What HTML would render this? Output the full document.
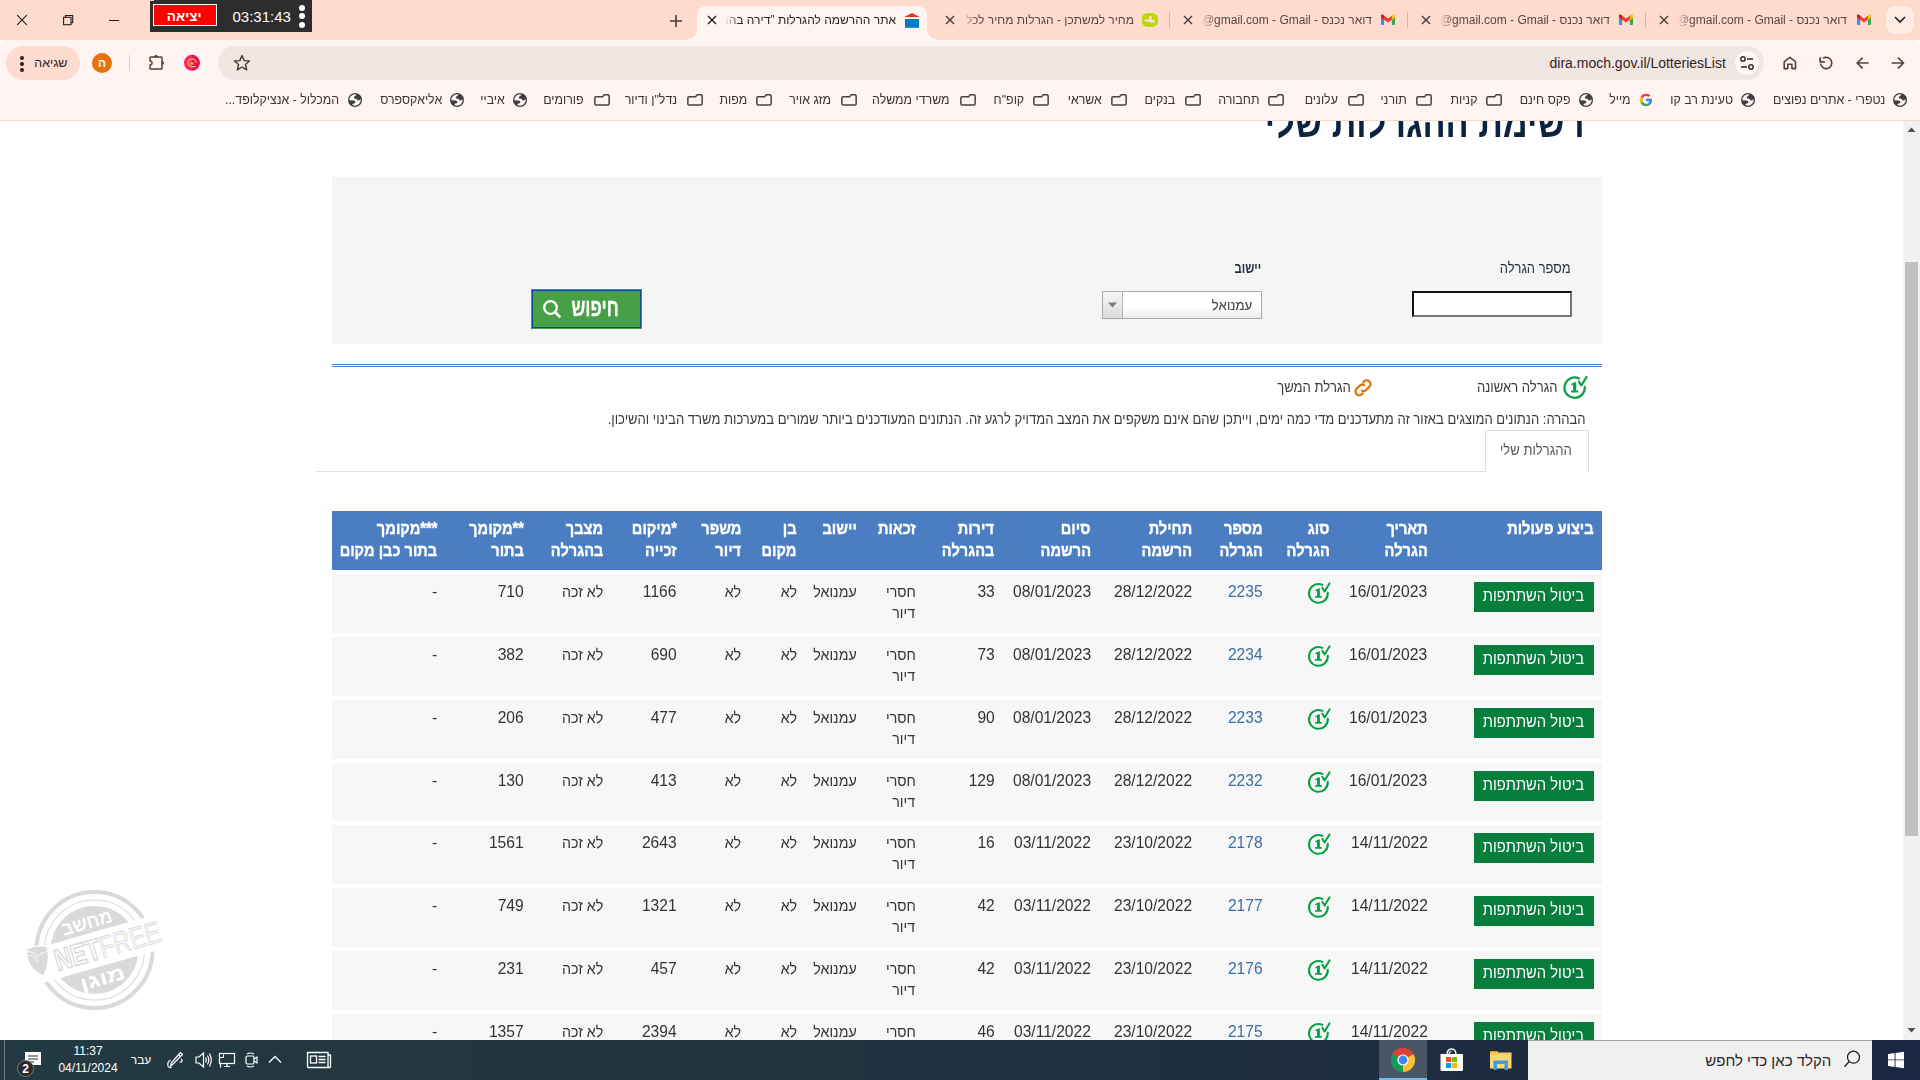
<!DOCTYPE html>
<html lang="he"><head><meta charset="utf-8"><title>dira</title>
<style>
html,body{margin:0;padding:0;}
body{width:1920px;height:1080px;overflow:hidden;position:relative;background:#fff;font-family:"Liberation Sans", sans-serif;}
.t{position:absolute;direction:rtl;white-space:nowrap;line-height:normal;}
.tl{position:absolute;direction:ltr;white-space:nowrap;line-height:normal;}
svg{display:block;}
</style></head><body>

<div style="position:absolute;left:0px;top:0px;width:1920px;height:40px;background:#fedbcc"></div>
<svg style="position:absolute;left:680px;top:0px;" width="270" height="41" viewBox="0 0 270 41"><path d="M0,40 Q16,40 17,30 L17,16 Q17,6 27,6 L237,6 Q247,6 247,16 L247,30 Q248,40 264,40 Z" fill="#fff4f1"/></svg>
<div style="position:absolute;left:1886px;top:6px;width:28px;height:28px;background:#ffece5;border-radius:9px"></div>
<svg style="position:absolute;left:1893px;top:14px;" width="14" height="12" viewBox="0 0 14 12"><path d="M2,3 L7,8 L12,3" fill="none" stroke="#1f1f1f" stroke-width="1.6"/></svg>
<svg style="position:absolute;left:15px;top:13px;" width="14" height="14" viewBox="0 0 14 14"><path d="M2.2,2.2 L11.8,11.8 M11.8,2.2 L2.2,11.8" stroke="#1f1f1f" stroke-width="1.1"/></svg>
<svg style="position:absolute;left:61px;top:13px;" width="14" height="14" viewBox="0 0 14 14"><rect x="2.6" y="4.3" width="7.4" height="7.4" fill="none" stroke="#1f1f1f" stroke-width="1.1"/><path d="M4.5,4.3 V2.5 H11.7 V9.7 H10" fill="none" stroke="#1f1f1f" stroke-width="1.1"/></svg>
<div style="position:absolute;left:109px;top:20px;width:10px;height:1px;background:#1f1f1f"></div>
<svg style="position:absolute;left:668px;top:13px;" width="16" height="16" viewBox="0 0 16 16"><path d="M8,2 V14 M2,8 H14" stroke="#4a3a35" stroke-width="1.6"/></svg>
<svg style="position:absolute;left:1857px;top:14px;" width="14" height="11" viewBox="0 0 14 11"><path d="M0,3.4 L3.1,5.7 V10.9 H0.9 Q0,10.9 0,10 Z" fill="#4285f4"/><path d="M10.9,5.7 L14,3.4 V10 Q14,10.9 13.1,10.9 H10.9 Z" fill="#34a853"/><path d="M10.9,1.7 L12.2,0.7 Q14,-0.2 14,1.9 V3.4 L10.9,5.7 Z" fill="#fbbc04"/><path d="M0,1.9 Q0,-0.2 1.8,0.7 L7,4.5 L10.9,1.7 V5.7 L7,8.4 L0,3.4 Z" fill="#ea4335"/><path d="M0,1.9 Q0,-0.2 1.8,0.7 L3.1,1.6 V5.7 L0,3.4 Z" fill="#c5221f"/></svg>
<div style="position:absolute;left:1677px;top:11px;width:170px;height:20px;overflow:hidden;-webkit-mask-image:linear-gradient(to right,transparent 0,#000 14px);mask-image:linear-gradient(to right,transparent 0,#000 14px);"><div style="position:absolute;right:0;top:0;white-space:nowrap;font-size:12px;line-height:18px;color:#5b4742;direction:ltr;display:flex;"><span>@gmail.com</span><span>&nbsp;-&nbsp;</span><span>Gmail</span><span>&nbsp;-&nbsp;</span><span dir="rtl">דואר נכנס</span></div></div>
<svg style="position:absolute;left:1658px;top:14px;" width="12" height="12" viewBox="0 0 12 12"><path d="M2,2 L10,10 M10,2 L2,10" stroke="#4a3a35" stroke-width="1.4"/></svg>
<div style="position:absolute;left:1645px;top:12px;width:1px;height:16px;background:#f3a98c"></div>
<svg style="position:absolute;left:1619px;top:14px;" width="14" height="11" viewBox="0 0 14 11"><path d="M0,3.4 L3.1,5.7 V10.9 H0.9 Q0,10.9 0,10 Z" fill="#4285f4"/><path d="M10.9,5.7 L14,3.4 V10 Q14,10.9 13.1,10.9 H10.9 Z" fill="#34a853"/><path d="M10.9,1.7 L12.2,0.7 Q14,-0.2 14,1.9 V3.4 L10.9,5.7 Z" fill="#fbbc04"/><path d="M0,1.9 Q0,-0.2 1.8,0.7 L7,4.5 L10.9,1.7 V5.7 L7,8.4 L0,3.4 Z" fill="#ea4335"/><path d="M0,1.9 Q0,-0.2 1.8,0.7 L3.1,1.6 V5.7 L0,3.4 Z" fill="#c5221f"/></svg>
<div style="position:absolute;left:1439px;top:11px;width:171px;height:20px;overflow:hidden;-webkit-mask-image:linear-gradient(to right,transparent 0,#000 14px);mask-image:linear-gradient(to right,transparent 0,#000 14px);"><div style="position:absolute;right:0;top:0;white-space:nowrap;font-size:12px;line-height:18px;color:#5b4742;direction:ltr;display:flex;"><span>@gmail.com</span><span>&nbsp;-&nbsp;</span><span>Gmail</span><span>&nbsp;-&nbsp;</span><span dir="rtl">דואר נכנס</span></div></div>
<svg style="position:absolute;left:1420px;top:14px;" width="12" height="12" viewBox="0 0 12 12"><path d="M2,2 L10,10 M10,2 L2,10" stroke="#4a3a35" stroke-width="1.4"/></svg>
<div style="position:absolute;left:1407px;top:12px;width:1px;height:16px;background:#f3a98c"></div>
<svg style="position:absolute;left:1381px;top:14px;" width="14" height="11" viewBox="0 0 14 11"><path d="M0,3.4 L3.1,5.7 V10.9 H0.9 Q0,10.9 0,10 Z" fill="#4285f4"/><path d="M10.9,5.7 L14,3.4 V10 Q14,10.9 13.1,10.9 H10.9 Z" fill="#34a853"/><path d="M10.9,1.7 L12.2,0.7 Q14,-0.2 14,1.9 V3.4 L10.9,5.7 Z" fill="#fbbc04"/><path d="M0,1.9 Q0,-0.2 1.8,0.7 L7,4.5 L10.9,1.7 V5.7 L7,8.4 L0,3.4 Z" fill="#ea4335"/><path d="M0,1.9 Q0,-0.2 1.8,0.7 L3.1,1.6 V5.7 L0,3.4 Z" fill="#c5221f"/></svg>
<div style="position:absolute;left:1201px;top:11px;width:171px;height:20px;overflow:hidden;-webkit-mask-image:linear-gradient(to right,transparent 0,#000 14px);mask-image:linear-gradient(to right,transparent 0,#000 14px);"><div style="position:absolute;right:0;top:0;white-space:nowrap;font-size:12px;line-height:18px;color:#5b4742;direction:ltr;display:flex;"><span>@gmail.com</span><span>&nbsp;-&nbsp;</span><span>Gmail</span><span>&nbsp;-&nbsp;</span><span dir="rtl">דואר נכנס</span></div></div>
<svg style="position:absolute;left:1182px;top:14px;" width="12" height="12" viewBox="0 0 12 12"><path d="M2,2 L10,10 M10,2 L2,10" stroke="#4a3a35" stroke-width="1.4"/></svg>
<div style="position:absolute;left:1169px;top:12px;width:1px;height:16px;background:#f3a98c"></div>
<svg style="position:absolute;left:1142px;top:12px;" width="16" height="16" viewBox="0 0 16 16"><rect x="0" y="0.9" width="16" height="14" rx="5.5" fill="#bed600"/><path d="M7,4.1 H9.6 V7.6 L12.7,8.2 V10.9 L2.6,9.6 V7.2 L7,7.5 Z" fill="#fedbcc"/></svg>
<div style="position:absolute;left:963px;top:11px;width:171px;height:20px;overflow:hidden;-webkit-mask-image:linear-gradient(to right,transparent 0,#000 14px);mask-image:linear-gradient(to right,transparent 0,#000 14px);"><div style="position:absolute;right:0;top:0;white-space:nowrap;font-size:12px;line-height:18px;color:#5b4742;direction:ltr;display:flex;"><span dir="rtl">מחיר למשתכן - הגרלות מחיר לכל</span></div></div>
<svg style="position:absolute;left:944px;top:14px;" width="12" height="12" viewBox="0 0 12 12"><path d="M2,2 L10,10 M10,2 L2,10" stroke="#4a3a35" stroke-width="1.4"/></svg>
<svg style="position:absolute;left:904px;top:12px;" width="16" height="16" viewBox="0 0 16 16"><path d="M0.1,4.9 L8,1 L15.8,4.9 Z" fill="#e8321e"/><rect x="1" y="7" width="14" height="8.8" fill="#007bc4"/></svg>
<div style="position:absolute;left:725px;top:11px;width:171px;height:20px;overflow:hidden;-webkit-mask-image:linear-gradient(to right,transparent 0,#000 14px);mask-image:linear-gradient(to right,transparent 0,#000 14px);"><div style="position:absolute;right:0;top:0;white-space:nowrap;font-size:12px;line-height:18px;color:#2a2220;direction:ltr;display:flex;"><span dir="rtl">אתר ההרשמה להגרלות "דירה בהנחה"</span></div></div>
<svg style="position:absolute;left:706px;top:14px;" width="12" height="12" viewBox="0 0 12 12"><path d="M2,2 L10,10 M10,2 L2,10" stroke="#1f1f1f" stroke-width="1.4"/></svg>
<div style="position:absolute;left:0px;top:40px;width:1920px;height:44px;background:#fff4f1;border-radius:8px 8px 0 0"></div>
<div style="position:absolute;left:218px;top:46px;width:1546px;height:34px;background:#f2e6e2;border-radius:17px"></div>
<div style="position:absolute;left:1735px;top:51px;width:24px;height:24px;background:#fff8f6;border-radius:12px"></div>
<svg style="position:absolute;left:1739px;top:55px;" width="16" height="16" viewBox="0 0 16 16"><circle cx="4" cy="4" r="2.2" fill="none" stroke="#3a2e2b" stroke-width="1.5"/><path d="M8,4 H14" stroke="#3a2e2b" stroke-width="1.6"/><circle cx="12" cy="12" r="2.2" fill="none" stroke="#3a2e2b" stroke-width="1.5"/><path d="M2,12 H8" stroke="#3a2e2b" stroke-width="1.6"/></svg>
<div class="tl " style="left:1549.5px;top:55.3px;font-size:14px;color:#2f2522;font-weight:normal;">dira.moch.gov.il/LotteriesList</div>
<svg style="position:absolute;left:232px;top:53px;" width="20" height="20" viewBox="0 0 20 20"><path d="M10,2.5 L12.2,7.6 L17.5,8 L13.4,11.5 L14.7,16.8 L10,14 L5.3,16.8 L6.6,11.5 L2.5,8 L7.8,7.6 Z" fill="none" stroke="#4a3a35" stroke-width="1.4" stroke-linejoin="round"/></svg>
<svg style="position:absolute;left:1888px;top:54px;" width="20" height="18" viewBox="0 0 20 18"><path d="M3.6,9 H15 M10,3.6 L15.4,9 L10,14.4" fill="none" stroke="#5a4037" stroke-width="1.6"/></svg>
<svg style="position:absolute;left:1852px;top:54px;" width="20" height="18" viewBox="0 0 20 18"><path d="M16.6,9 H5.2 M10.6,3.6 L5.2,9 L10.6,14.4" fill="none" stroke="#5a4037" stroke-width="1.6"/></svg>
<svg style="position:absolute;left:1816px;top:53px;" width="20" height="20" viewBox="0 0 20 20"><path d="M4.62,10.49 A5.6,5.6 0 1 0 6.99,5.41" fill="none" stroke="#5a4037" stroke-width="1.6"/><path d="M4.2,4.2 V8.8 H8.8" fill="none" stroke="#5a4037" stroke-width="1.7"/></svg>
<svg style="position:absolute;left:1780px;top:53px;" width="20" height="20" viewBox="0 0 20 20"><path d="M4.2,15.6 V8.6 L9.85,4.3 L15.5,8.6 V15.6 H11.9 V11.2 H7.8 V15.6 Z" fill="none" stroke="#5a4037" stroke-width="1.6" stroke-linejoin="round"/></svg>
<svg style="position:absolute;left:183px;top:54px;" width="18" height="18" viewBox="0 0 18 18"><defs><linearGradient id="pg" x1="0" x2="1"><stop offset="0" stop-color="#ff1f6b"/><stop offset="0.5" stop-color="#ff1f6b"/><stop offset="0.5" stop-color="#e3105c"/><stop offset="1" stop-color="#e3105c"/></linearGradient></defs><circle cx="9" cy="8.8" r="8" fill="url(#pg)"/><path d="M12.8,12.6 H9 A3.9,3.9 0 1 1 12.9,8.7" fill="none" stroke="#ffc23d" stroke-width="1.3"/><path d="M6.6,10.6 L8.8,7.2 L11,10.6 Z" fill="#ffb13d"/></svg>
<svg style="position:absolute;left:146px;top:53px;" width="20" height="20" viewBox="0 0 20 20"><path d="M4,4.8 Q4,4 4.8,4 H15.2 Q16,4 16,4.8 V15.2 Q16,16 15.2,16 H4.8 Q4,16 4,15.2 V12 A2,2 0 0 0 4,8 Z" fill="none" stroke="#5a4037" stroke-width="1.5" stroke-linejoin="round"/><path d="M8.2,4 A1.8,1.8 0 0 1 11.8,4 Z M16,8.2 A1.8,1.8 0 0 1 16,11.8 Z" fill="#5a4037" stroke="#5a4037" stroke-width="0.6"/></svg>
<div style="position:absolute;left:129px;top:55px;width:1px;height:16px;background:#f6c4b0"></div>
<div style="position:absolute;left:92px;top:53px;width:20px;height:20px;background:#e8710a;border-radius:10px"></div>
<div style="position:absolute;left:92px;top:53px;width:20px;height:20px;line-height:20px;text-align:center;color:#fff;font-size:12px;font-weight:bold;direction:rtl">ה</div>
<div style="position:absolute;left:6px;top:46px;width:74px;height:34px;background:#fedccf;border-radius:17px"></div>
<div style="position:absolute;left:20px;top:55.5px;width:4px;height:4px;background:#2b1f1c;border-radius:2px"></div>
<div style="position:absolute;left:20px;top:61.5px;width:4px;height:4px;background:#2b1f1c;border-radius:2px"></div>
<div style="position:absolute;left:20px;top:67.5px;width:4px;height:4px;background:#2b1f1c;border-radius:2px"></div>
<div class="t " style="right:1852.5px;top:56.2px;font-size:12.5px;color:#2b1f1c;font-weight:normal;">שגיאה</div>
<div style="position:absolute;left:0px;top:84px;width:1920px;height:36px;background:#fff4f1"></div>
<div style="position:absolute;left:0px;top:120px;width:1920px;height:1px;background:#f6d6c9"></div>
<svg style="position:absolute;left:1892px;top:92px;" width="16" height="16" viewBox="0 0 16 16"><circle cx="8" cy="8" r="6.35" fill="none" stroke="#3c4043" stroke-width="1.35"/><path d="M9.6,1.8 Q9.4,3.2 8.2,3.9 Q6.8,4.6 6.9,5.9 Q7.2,6.8 8.6,6.6 Q9.6,6.8 10.2,7.8 Q11.2,8.8 12.2,8.2 Q13.4,7.6 14.2,6.6 L14.4,5.2 Q13,2.6 9.6,1.8 Z" fill="#3c4043"/><path d="M1.8,8.2 Q4.2,8.2 6.6,8.6 Q8.6,9.2 8.4,10.4 Q8.0,11.4 6.4,11.5 Q5.4,11.8 5.4,13 L5.6,14.2 Q2.4,12.6 1.8,8.2 Z" fill="#3c4043"/></svg>
<div class="t " style="right:35.0px;top:92.2px;font-size:13px;color:#3d3230;font-weight:normal;transform:scaleX(0.95);transform-origin:100% 50%;">נטפרי - אתרים נפוצים</div>
<svg style="position:absolute;left:1740px;top:92px;" width="16" height="16" viewBox="0 0 16 16"><circle cx="8" cy="8" r="6.35" fill="none" stroke="#3c4043" stroke-width="1.35"/><path d="M9.6,1.8 Q9.4,3.2 8.2,3.9 Q6.8,4.6 6.9,5.9 Q7.2,6.8 8.6,6.6 Q9.6,6.8 10.2,7.8 Q11.2,8.8 12.2,8.2 Q13.4,7.6 14.2,6.6 L14.4,5.2 Q13,2.6 9.6,1.8 Z" fill="#3c4043"/><path d="M1.8,8.2 Q4.2,8.2 6.6,8.6 Q8.6,9.2 8.4,10.4 Q8.0,11.4 6.4,11.5 Q5.4,11.8 5.4,13 L5.6,14.2 Q2.4,12.6 1.8,8.2 Z" fill="#3c4043"/></svg>
<div class="t " style="right:187.0px;top:92.2px;font-size:13px;color:#3d3230;font-weight:normal;transform:scaleX(0.95);transform-origin:100% 50%;">טעינת רב קו</div>
<svg style="position:absolute;left:1638px;top:92px;" width="16" height="16" viewBox="0 0 16 16"><g transform="translate(8,8) scale(0.84) translate(-8,-8.1)"><path d="M15.2,8.2 Q15.2,7.4 15.1,6.7 H8 V9.6 H12.1 Q11.8,11 10.6,11.9 V13.8 H13 Q15.2,11.8 15.2,8.2 Z" fill="#4285f4"/><path d="M8,15.4 Q10.9,15.4 13,13.8 L10.6,11.9 Q9.6,12.6 8,12.6 Q5.2,12.6 4.2,10 H1.8 V12 Q3.8,15.4 8,15.4 Z" fill="#34a853"/><path d="M4.2,10 Q3.9,9.1 3.9,8 Q3.9,6.9 4.2,6 V4 H1.8 Q0.8,5.9 0.8,8 Q0.8,10.1 1.8,12 Z" fill="#fbbc05"/><path d="M8,3.4 Q9.7,3.4 10.8,4.5 L13,2.3 Q11,0.6 8,0.6 Q3.8,0.6 1.8,4 L4.2,6 Q5.2,3.4 8,3.4 Z" fill="#ea4335"/></g></svg>
<div class="t " style="right:289.3px;top:92.2px;font-size:13px;color:#3d3230;font-weight:normal;transform:scaleX(0.95);transform-origin:100% 50%;">מייל</div>
<svg style="position:absolute;left:1578px;top:92px;" width="16" height="16" viewBox="0 0 16 16"><circle cx="8" cy="8" r="6.35" fill="none" stroke="#3c4043" stroke-width="1.35"/><path d="M9.6,1.8 Q9.4,3.2 8.2,3.9 Q6.8,4.6 6.9,5.9 Q7.2,6.8 8.6,6.6 Q9.6,6.8 10.2,7.8 Q11.2,8.8 12.2,8.2 Q13.4,7.6 14.2,6.6 L14.4,5.2 Q13,2.6 9.6,1.8 Z" fill="#3c4043"/><path d="M1.8,8.2 Q4.2,8.2 6.6,8.6 Q8.6,9.2 8.4,10.4 Q8.0,11.4 6.4,11.5 Q5.4,11.8 5.4,13 L5.6,14.2 Q2.4,12.6 1.8,8.2 Z" fill="#3c4043"/></svg>
<div class="t " style="right:349.0px;top:92.2px;font-size:13px;color:#3d3230;font-weight:normal;transform:scaleX(0.95);transform-origin:100% 50%;">פקס חינם</div>
<svg style="position:absolute;left:1484px;top:93px;" width="20" height="14" viewBox="0 0 20 14"><path d="M2.85,5 Q2.85,3.75 4.1,3.75 H10.6 L12.1,1.85 H15.9 Q17.15,1.85 17.15,3.1 V10.8 Q17.15,12.05 15.9,12.05 H4.1 Q2.85,12.05 2.85,10.8 Z" fill="none" stroke="#4a3f3c" stroke-width="1.5" stroke-linejoin="round"/></svg>
<div class="t " style="right:443.0px;top:92.2px;font-size:13px;color:#3d3230;font-weight:normal;transform:scaleX(0.95);transform-origin:100% 50%;">קניות</div>
<svg style="position:absolute;left:1414px;top:93px;" width="20" height="14" viewBox="0 0 20 14"><path d="M2.85,5 Q2.85,3.75 4.1,3.75 H10.6 L12.1,1.85 H15.9 Q17.15,1.85 17.15,3.1 V10.8 Q17.15,12.05 15.9,12.05 H4.1 Q2.85,12.05 2.85,10.8 Z" fill="none" stroke="#4a3f3c" stroke-width="1.5" stroke-linejoin="round"/></svg>
<div class="t " style="right:513.0px;top:92.2px;font-size:13px;color:#3d3230;font-weight:normal;transform:scaleX(0.95);transform-origin:100% 50%;">תורני</div>
<svg style="position:absolute;left:1346px;top:93px;" width="20" height="14" viewBox="0 0 20 14"><path d="M2.85,5 Q2.85,3.75 4.1,3.75 H10.6 L12.1,1.85 H15.9 Q17.15,1.85 17.15,3.1 V10.8 Q17.15,12.05 15.9,12.05 H4.1 Q2.85,12.05 2.85,10.8 Z" fill="none" stroke="#4a3f3c" stroke-width="1.5" stroke-linejoin="round"/></svg>
<div class="t " style="right:582.0px;top:92.2px;font-size:13px;color:#3d3230;font-weight:normal;transform:scaleX(0.95);transform-origin:100% 50%;">עלונים</div>
<svg style="position:absolute;left:1266px;top:93px;" width="20" height="14" viewBox="0 0 20 14"><path d="M2.85,5 Q2.85,3.75 4.1,3.75 H10.6 L12.1,1.85 H15.9 Q17.15,1.85 17.15,3.1 V10.8 Q17.15,12.05 15.9,12.05 H4.1 Q2.85,12.05 2.85,10.8 Z" fill="none" stroke="#4a3f3c" stroke-width="1.5" stroke-linejoin="round"/></svg>
<div class="t " style="right:660.7px;top:92.2px;font-size:13px;color:#3d3230;font-weight:normal;transform:scaleX(0.95);transform-origin:100% 50%;">תחבורה</div>
<svg style="position:absolute;left:1183px;top:93px;" width="20" height="14" viewBox="0 0 20 14"><path d="M2.85,5 Q2.85,3.75 4.1,3.75 H10.6 L12.1,1.85 H15.9 Q17.15,1.85 17.15,3.1 V10.8 Q17.15,12.05 15.9,12.05 H4.1 Q2.85,12.05 2.85,10.8 Z" fill="none" stroke="#4a3f3c" stroke-width="1.5" stroke-linejoin="round"/></svg>
<div class="t " style="right:745.0px;top:92.2px;font-size:13px;color:#3d3230;font-weight:normal;transform:scaleX(0.95);transform-origin:100% 50%;">בנקים</div>
<svg style="position:absolute;left:1109px;top:93px;" width="20" height="14" viewBox="0 0 20 14"><path d="M2.85,5 Q2.85,3.75 4.1,3.75 H10.6 L12.1,1.85 H15.9 Q17.15,1.85 17.15,3.1 V10.8 Q17.15,12.05 15.9,12.05 H4.1 Q2.85,12.05 2.85,10.8 Z" fill="none" stroke="#4a3f3c" stroke-width="1.5" stroke-linejoin="round"/></svg>
<div class="t " style="right:818.3px;top:92.2px;font-size:13px;color:#3d3230;font-weight:normal;transform:scaleX(0.95);transform-origin:100% 50%;">אשראי</div>
<svg style="position:absolute;left:1031px;top:93px;" width="20" height="14" viewBox="0 0 20 14"><path d="M2.85,5 Q2.85,3.75 4.1,3.75 H10.6 L12.1,1.85 H15.9 Q17.15,1.85 17.15,3.1 V10.8 Q17.15,12.05 15.9,12.05 H4.1 Q2.85,12.05 2.85,10.8 Z" fill="none" stroke="#4a3f3c" stroke-width="1.5" stroke-linejoin="round"/></svg>
<div class="t " style="right:896.0px;top:92.2px;font-size:13px;color:#3d3230;font-weight:normal;transform:scaleX(0.95);transform-origin:100% 50%;">קופ"ח</div>
<svg style="position:absolute;left:958px;top:93px;" width="20" height="14" viewBox="0 0 20 14"><path d="M2.85,5 Q2.85,3.75 4.1,3.75 H10.6 L12.1,1.85 H15.9 Q17.15,1.85 17.15,3.1 V10.8 Q17.15,12.05 15.9,12.05 H4.1 Q2.85,12.05 2.85,10.8 Z" fill="none" stroke="#4a3f3c" stroke-width="1.5" stroke-linejoin="round"/></svg>
<div class="t " style="right:970.0px;top:92.2px;font-size:13px;color:#3d3230;font-weight:normal;transform:scaleX(0.95);transform-origin:100% 50%;">משרדי ממשלה</div>
<svg style="position:absolute;left:839px;top:93px;" width="20" height="14" viewBox="0 0 20 14"><path d="M2.85,5 Q2.85,3.75 4.1,3.75 H10.6 L12.1,1.85 H15.9 Q17.15,1.85 17.15,3.1 V10.8 Q17.15,12.05 15.9,12.05 H4.1 Q2.85,12.05 2.85,10.8 Z" fill="none" stroke="#4a3f3c" stroke-width="1.5" stroke-linejoin="round"/></svg>
<div class="t " style="right:1089.0px;top:92.2px;font-size:13px;color:#3d3230;font-weight:normal;transform:scaleX(0.95);transform-origin:100% 50%;">מזג אויר</div>
<svg style="position:absolute;left:754px;top:93px;" width="20" height="14" viewBox="0 0 20 14"><path d="M2.85,5 Q2.85,3.75 4.1,3.75 H10.6 L12.1,1.85 H15.9 Q17.15,1.85 17.15,3.1 V10.8 Q17.15,12.05 15.9,12.05 H4.1 Q2.85,12.05 2.85,10.8 Z" fill="none" stroke="#4a3f3c" stroke-width="1.5" stroke-linejoin="round"/></svg>
<div class="t " style="right:1173.0px;top:92.2px;font-size:13px;color:#3d3230;font-weight:normal;transform:scaleX(0.95);transform-origin:100% 50%;">מפות</div>
<svg style="position:absolute;left:685px;top:93px;" width="20" height="14" viewBox="0 0 20 14"><path d="M2.85,5 Q2.85,3.75 4.1,3.75 H10.6 L12.1,1.85 H15.9 Q17.15,1.85 17.15,3.1 V10.8 Q17.15,12.05 15.9,12.05 H4.1 Q2.85,12.05 2.85,10.8 Z" fill="none" stroke="#4a3f3c" stroke-width="1.5" stroke-linejoin="round"/></svg>
<div class="t " style="right:1242.5px;top:92.2px;font-size:13px;color:#3d3230;font-weight:normal;transform:scaleX(0.95);transform-origin:100% 50%;">נדל"ן ודיור</div>
<svg style="position:absolute;left:592px;top:93px;" width="20" height="14" viewBox="0 0 20 14"><path d="M2.85,5 Q2.85,3.75 4.1,3.75 H10.6 L12.1,1.85 H15.9 Q17.15,1.85 17.15,3.1 V10.8 Q17.15,12.05 15.9,12.05 H4.1 Q2.85,12.05 2.85,10.8 Z" fill="none" stroke="#4a3f3c" stroke-width="1.5" stroke-linejoin="round"/></svg>
<div class="t " style="right:1336.2px;top:92.2px;font-size:13px;color:#3d3230;font-weight:normal;transform:scaleX(0.95);transform-origin:100% 50%;">פורומים</div>
<svg style="position:absolute;left:512px;top:92px;" width="16" height="16" viewBox="0 0 16 16"><circle cx="8" cy="8" r="6.35" fill="none" stroke="#3c4043" stroke-width="1.35"/><path d="M9.6,1.8 Q9.4,3.2 8.2,3.9 Q6.8,4.6 6.9,5.9 Q7.2,6.8 8.6,6.6 Q9.6,6.8 10.2,7.8 Q11.2,8.8 12.2,8.2 Q13.4,7.6 14.2,6.6 L14.4,5.2 Q13,2.6 9.6,1.8 Z" fill="#3c4043"/><path d="M1.8,8.2 Q4.2,8.2 6.6,8.6 Q8.6,9.2 8.4,10.4 Q8.0,11.4 6.4,11.5 Q5.4,11.8 5.4,13 L5.6,14.2 Q2.4,12.6 1.8,8.2 Z" fill="#3c4043"/></svg>
<div class="t " style="right:1415.5px;top:92.2px;font-size:13px;color:#3d3230;font-weight:normal;transform:scaleX(0.95);transform-origin:100% 50%;">איביי</div>
<svg style="position:absolute;left:449px;top:92px;" width="16" height="16" viewBox="0 0 16 16"><circle cx="8" cy="8" r="6.35" fill="none" stroke="#3c4043" stroke-width="1.35"/><path d="M9.6,1.8 Q9.4,3.2 8.2,3.9 Q6.8,4.6 6.9,5.9 Q7.2,6.8 8.6,6.6 Q9.6,6.8 10.2,7.8 Q11.2,8.8 12.2,8.2 Q13.4,7.6 14.2,6.6 L14.4,5.2 Q13,2.6 9.6,1.8 Z" fill="#3c4043"/><path d="M1.8,8.2 Q4.2,8.2 6.6,8.6 Q8.6,9.2 8.4,10.4 Q8.0,11.4 6.4,11.5 Q5.4,11.8 5.4,13 L5.6,14.2 Q2.4,12.6 1.8,8.2 Z" fill="#3c4043"/></svg>
<div class="t " style="right:1478.0px;top:92.2px;font-size:13px;color:#3d3230;font-weight:normal;transform:scaleX(0.95);transform-origin:100% 50%;">אליאקספרס</div>
<svg style="position:absolute;left:347px;top:92px;" width="16" height="16" viewBox="0 0 16 16"><circle cx="8" cy="8" r="6.35" fill="none" stroke="#3c4043" stroke-width="1.35"/><path d="M9.6,1.8 Q9.4,3.2 8.2,3.9 Q6.8,4.6 6.9,5.9 Q7.2,6.8 8.6,6.6 Q9.6,6.8 10.2,7.8 Q11.2,8.8 12.2,8.2 Q13.4,7.6 14.2,6.6 L14.4,5.2 Q13,2.6 9.6,1.8 Z" fill="#3c4043"/><path d="M1.8,8.2 Q4.2,8.2 6.6,8.6 Q8.6,9.2 8.4,10.4 Q8.0,11.4 6.4,11.5 Q5.4,11.8 5.4,13 L5.6,14.2 Q2.4,12.6 1.8,8.2 Z" fill="#3c4043"/></svg>
<div class="t " style="right:1580.5px;top:92.2px;font-size:13px;color:#3d3230;font-weight:normal;transform:scaleX(0.95);transform-origin:100% 50%;">המכלול - אנציקלופד...</div>
<div style="position:absolute;left:150px;top:0px;width:162px;height:32px;background:#2d2d2d"></div>
<div style="position:absolute;left:150px;top:0px;width:4px;height:1px;background:#fedbcc"></div>
<div style="position:absolute;left:153px;top:4px;width:64px;height:22px;background:#ff0000;box-sizing:border-box;border:1px solid #fff"></div>
<div class="t " style="right:1718.5px;top:8.8px;font-size:13.5px;color:#fff;font-weight:bold;">יציאה</div>
<div class="tl " style="left:232.5px;top:8.4px;font-size:15px;color:#fff;font-weight:normal;">03:31:43</div>
<div style="position:absolute;left:299px;top:4.5px;width:6px;height:6px;background:#fff;border-radius:3px"></div>
<div style="position:absolute;left:299px;top:13.399999999999999px;width:6px;height:6px;background:#fff;border-radius:3px"></div>
<div style="position:absolute;left:299px;top:21.6px;width:6px;height:6px;background:#fff;border-radius:3px"></div>
<div id="page" style="position:absolute;left:0;top:0;width:1920px;height:1080px;clip-path:inset(121px 17px 40px 0);">
<div style="position:absolute;left:0px;top:121px;width:1903px;height:919px;background:#fff"></div>
<div class="t " style="right:335.0px;top:100.8px;font-size:40px;color:#0b2340;font-weight:bold;transform:scaleX(0.856);transform-origin:100% 50%;">רשימת ההגרלות שלי</div>
<div style="position:absolute;left:332px;top:177px;width:1270px;height:167px;background:#f5f5f5"></div>
<div class="t " style="right:349.0px;top:260.2px;font-size:14.5px;color:#1f2d3d;font-weight:normal;transform:scaleX(0.89);transform-origin:100% 50%;">מספר הגרלה</div>
<div style="position:absolute;left:1412px;top:291px;width:160px;height:26px;background:#fff;box-sizing:border-box;border:2px solid;border-color:#111 #767676 #767676 #111"></div>
<div class="t " style="right:658.8px;top:260.2px;font-size:14.5px;color:#1f2d3d;font-weight:bold;transform:scaleX(0.78);transform-origin:100% 50%;">יישוב</div>
<div style="position:absolute;left:1102px;top:291px;width:160px;height:28px;box-sizing:border-box;border:1px solid #a9a9a9;background:linear-gradient(#fff 0,#fff 55%,#ececec 100%)"></div>
<div style="position:absolute;left:1103px;top:292px;width:20px;height:26px;box-sizing:border-box;border-right:1px solid #b5b5b5;background:linear-gradient(#f6f6f6,#dcdcdc)"></div>
<svg style="position:absolute;left:1107px;top:301px;" width="11" height="8" viewBox="0 0 11 8"><path d="M1,1.5 H10 L5.5,6.5 Z" fill="#7a7a7a"/></svg>
<div class="t " style="right:667.7px;top:297.7px;font-size:13.5px;color:#3a3a3a;font-weight:normal;transform:scaleX(0.98);transform-origin:100% 50%;">עמנואל</div>
<div style="position:absolute;left:531px;top:289px;width:111px;height:40px;background:#47a046;box-shadow:inset 0 0 0 1px #47a046,inset 0 0 0 2px #0b4a8a"></div>
<div class="t " style="right:1301.2px;top:294.0px;font-size:24px;color:#fff;font-weight:bold;transform:scaleX(0.72);transform-origin:100% 50%;-webkit-text-stroke:0.3px #fff;">חיפוש</div>
<svg style="position:absolute;left:540px;top:297px;" width="24" height="24" viewBox="0 0 24 24"><circle cx="10.5" cy="10.5" r="6.3" fill="none" stroke="#fff" stroke-width="2.3"/><path d="M15,15 L19.5,19.5" stroke="#fff" stroke-width="2.6" stroke-linecap="round"/></svg>
<div style="position:absolute;left:332px;top:364px;width:1270px;height:1px;background:#4a7abf"></div>
<div style="position:absolute;left:332px;top:366px;width:1270px;height:1px;background:#4a7abf"></div>
<svg style="position:absolute;left:1558.4px;top:371.4px;" width="35" height="35" viewBox="0 0 35 35"><g transform="scale(1.08)"><path d="M19.37,6.88 A9.4,9.4 0 1 0 24.78,14.74" fill="none" stroke="#08a045" stroke-width="2.1" stroke-linecap="round"/><path d="M19.3,9.8 L21.6,13.4 L26.5,5.4" fill="none" stroke="#08a045" stroke-width="2" stroke-linecap="round" stroke-linejoin="round"/><path d="M12.4,11.9 L15.2,10.4 H16.9 V18.1 H18.8 V19.8 H12.1 V18.1 H14 V12.8 L12.4,13.5 Z" fill="#08a045"/></g></svg>
<div class="t " style="right:362.6px;top:379.4px;font-size:14.5px;color:#3a3a3a;font-weight:normal;transform:scaleX(0.9);transform-origin:100% 50%;">הגרלה ראשונה</div>
<svg style="position:absolute;left:1351px;top:376px;" width="24" height="24" viewBox="0 0 24 24"><g transform="translate(12.0,11.8) rotate(-45)" fill="none" stroke="#e07000" stroke-width="2.2" stroke-linecap="butt"><path d="M-2.8,0.4 A3.8,3.8 0 0 0 1.0,3.8 L5.2,3.8 A3.8,3.8 0 0 0 5.2,-3.8 L3.4,-3.8"/><path d="M2.8,-0.4 A3.8,3.8 0 0 0 -1.0,-3.8 L-5.2,-3.8 A3.8,3.8 0 0 0 -5.2,3.8 L-3.4,3.8"/></g></svg>
<div class="t " style="right:569.0px;top:379.4px;font-size:14.5px;color:#3a3a3a;font-weight:normal;transform:scaleX(0.9);transform-origin:100% 50%;">הגרלת המשך</div>
<div class="t " style="right:334.0px;top:410.9px;font-size:14.5px;color:#3a3a3a;font-weight:normal;transform:scaleX(0.9);transform-origin:100% 50%;">הבהרה: הנתונים המוצגים באזור זה מתעדכנים מדי כמה ימים, וייתכן שהם אינם משקפים את המצב המדויק לרגע זה. הנתונים המעודכנים ביותר שמורים במערכות משרד הבינוי והשיכון.</div>
<div style="position:absolute;left:317px;top:471px;width:1169px;height:1px;background:#dddddd"></div>
<div style="position:absolute;left:1485px;top:430px;width:104px;height:42px;box-sizing:border-box;border:1px solid #dddddd;border-bottom:none;background:#fff"></div>
<div class="t " style="right:348.0px;top:441.9px;font-size:14.5px;color:#555555;font-weight:normal;transform:scaleX(0.9);transform-origin:100% 50%;">ההגרלות שלי</div>
<div style="position:absolute;left:332px;top:511px;width:1270px;height:59px;background:#4a7dc1"></div>
<div class="t " style="right:326.5px;top:518.9px;font-size:16.5px;color:#fff;font-weight:bold;transform:scaleX(0.885);transform-origin:100% 50%;-webkit-text-stroke:0.4px #fff;">ביצוע פעולות</div>
<div class="t " style="right:492.5px;top:518.9px;font-size:16.5px;color:#fff;font-weight:bold;transform:scaleX(0.885);transform-origin:100% 50%;-webkit-text-stroke:0.4px #fff;">תאריך</div>
<div class="t " style="right:492.5px;top:540.8px;font-size:16.5px;color:#fff;font-weight:bold;transform:scaleX(0.885);transform-origin:100% 50%;-webkit-text-stroke:0.4px #fff;">הגרלה</div>
<div class="t " style="right:590.5px;top:518.9px;font-size:16.5px;color:#fff;font-weight:bold;transform:scaleX(0.885);transform-origin:100% 50%;-webkit-text-stroke:0.4px #fff;">סוג</div>
<div class="t " style="right:590.5px;top:540.8px;font-size:16.5px;color:#fff;font-weight:bold;transform:scaleX(0.885);transform-origin:100% 50%;-webkit-text-stroke:0.4px #fff;">הגרלה</div>
<div class="t " style="right:657.5px;top:518.9px;font-size:16.5px;color:#fff;font-weight:bold;transform:scaleX(0.885);transform-origin:100% 50%;-webkit-text-stroke:0.4px #fff;">מספר</div>
<div class="t " style="right:657.5px;top:540.8px;font-size:16.5px;color:#fff;font-weight:bold;transform:scaleX(0.885);transform-origin:100% 50%;-webkit-text-stroke:0.4px #fff;">הגרלה</div>
<div class="t " style="right:728.0px;top:518.9px;font-size:16.5px;color:#fff;font-weight:bold;transform:scaleX(0.885);transform-origin:100% 50%;-webkit-text-stroke:0.4px #fff;">תחילת</div>
<div class="t " style="right:728.0px;top:540.8px;font-size:16.5px;color:#fff;font-weight:bold;transform:scaleX(0.885);transform-origin:100% 50%;-webkit-text-stroke:0.4px #fff;">הרשמה</div>
<div class="t " style="right:829.4px;top:518.9px;font-size:16.5px;color:#fff;font-weight:bold;transform:scaleX(0.885);transform-origin:100% 50%;-webkit-text-stroke:0.4px #fff;">סיום</div>
<div class="t " style="right:829.4px;top:540.8px;font-size:16.5px;color:#fff;font-weight:bold;transform:scaleX(0.885);transform-origin:100% 50%;-webkit-text-stroke:0.4px #fff;">הרשמה</div>
<div class="t " style="right:925.6px;top:518.9px;font-size:16.5px;color:#fff;font-weight:bold;transform:scaleX(0.885);transform-origin:100% 50%;-webkit-text-stroke:0.4px #fff;">דירות</div>
<div class="t " style="right:925.6px;top:540.8px;font-size:16.5px;color:#fff;font-weight:bold;transform:scaleX(0.885);transform-origin:100% 50%;-webkit-text-stroke:0.4px #fff;">בהגרלה</div>
<div class="t " style="right:1004.6px;top:518.9px;font-size:16.5px;color:#fff;font-weight:bold;transform:scaleX(0.885);transform-origin:100% 50%;-webkit-text-stroke:0.4px #fff;">זכאות</div>
<div class="t " style="right:1063.7px;top:518.9px;font-size:16.5px;color:#fff;font-weight:bold;transform:scaleX(0.885);transform-origin:100% 50%;-webkit-text-stroke:0.4px #fff;">יישוב</div>
<div class="t " style="right:1123.2px;top:518.9px;font-size:16.5px;color:#fff;font-weight:bold;transform:scaleX(0.885);transform-origin:100% 50%;-webkit-text-stroke:0.4px #fff;">בן</div>
<div class="t " style="right:1123.2px;top:540.8px;font-size:16.5px;color:#fff;font-weight:bold;transform:scaleX(0.885);transform-origin:100% 50%;-webkit-text-stroke:0.4px #fff;">מקום</div>
<div class="t " style="right:1179.0px;top:518.9px;font-size:16.5px;color:#fff;font-weight:bold;transform:scaleX(0.885);transform-origin:100% 50%;-webkit-text-stroke:0.4px #fff;">משפר</div>
<div class="t " style="right:1179.0px;top:540.8px;font-size:16.5px;color:#fff;font-weight:bold;transform:scaleX(0.885);transform-origin:100% 50%;-webkit-text-stroke:0.4px #fff;">דיור</div>
<div class="t " style="right:1243.2px;top:518.9px;font-size:16.5px;color:#fff;font-weight:bold;transform:scaleX(0.885);transform-origin:100% 50%;-webkit-text-stroke:0.4px #fff;">*מיקום</div>
<div class="t " style="right:1243.2px;top:540.8px;font-size:16.5px;color:#fff;font-weight:bold;transform:scaleX(0.885);transform-origin:100% 50%;-webkit-text-stroke:0.4px #fff;">זכייה</div>
<div class="t " style="right:1317.0px;top:518.9px;font-size:16.5px;color:#fff;font-weight:bold;transform:scaleX(0.885);transform-origin:100% 50%;-webkit-text-stroke:0.4px #fff;">מצבך</div>
<div class="t " style="right:1317.0px;top:540.8px;font-size:16.5px;color:#fff;font-weight:bold;transform:scaleX(0.885);transform-origin:100% 50%;-webkit-text-stroke:0.4px #fff;">בהגרלה</div>
<div class="t " style="right:1396.5px;top:518.9px;font-size:16.5px;color:#fff;font-weight:bold;transform:scaleX(0.885);transform-origin:100% 50%;-webkit-text-stroke:0.4px #fff;">**מקומך</div>
<div class="t " style="right:1396.5px;top:540.8px;font-size:16.5px;color:#fff;font-weight:bold;transform:scaleX(0.885);transform-origin:100% 50%;-webkit-text-stroke:0.4px #fff;">בתור</div>
<div class="t " style="right:1482.8px;top:518.9px;font-size:16.5px;color:#fff;font-weight:bold;transform:scaleX(0.885);transform-origin:100% 50%;-webkit-text-stroke:0.4px #fff;">***מקומך</div>
<div class="t " style="right:1482.8px;top:540.8px;font-size:16.5px;color:#fff;font-weight:bold;transform:scaleX(0.885);transform-origin:100% 50%;-webkit-text-stroke:0.4px #fff;">בתור כבן מקום</div>
<div style="position:absolute;left:332px;top:574px;width:1270px;height:59px;background:#f7f7f7"></div>
<div style="position:absolute;left:1474px;top:582px;width:120px;height:30px;background:#077e3c"></div>
<div class="t " style="right:335.4px;top:587.4px;font-size:16px;color:#fff;font-weight:normal;transform:scaleX(0.92);transform-origin:100% 50%;">ביטול השתתפות</div>
<div class="t " style="right:492.5px;top:583.0px;font-size:16px;color:#333333;font-weight:normal;transform:scaleX(0.975);transform-origin:100% 50%;">16/01/2023</div>
<svg style="position:absolute;left:1303.0px;top:578.0px;" width="32" height="32" viewBox="0 0 32 32"><g transform="scale(1.0)"><path d="M19.37,6.88 A9.4,9.4 0 1 0 24.78,14.74" fill="none" stroke="#08a045" stroke-width="2.1" stroke-linecap="round"/><path d="M19.3,9.8 L21.6,13.4 L26.5,5.4" fill="none" stroke="#08a045" stroke-width="2" stroke-linecap="round" stroke-linejoin="round"/><path d="M12.4,11.9 L15.2,10.4 H16.9 V18.1 H18.8 V19.8 H12.1 V18.1 H14 V12.8 L12.4,13.5 Z" fill="#08a045"/></g></svg>
<div class="t " style="right:657.5px;top:583.0px;font-size:16px;color:#3a6ea5;font-weight:normal;transform:scaleX(0.975);transform-origin:100% 50%;">2235</div>
<div class="t " style="right:728.0px;top:583.0px;font-size:16px;color:#333333;font-weight:normal;transform:scaleX(0.975);transform-origin:100% 50%;">28/12/2022</div>
<div class="t " style="right:829.4px;top:583.0px;font-size:16px;color:#333333;font-weight:normal;transform:scaleX(0.975);transform-origin:100% 50%;">08/01/2023</div>
<div class="t " style="right:925.6px;top:583.0px;font-size:16px;color:#333333;font-weight:normal;transform:scaleX(0.975);transform-origin:100% 50%;">33</div>
<div class="t " style="right:1004.6px;top:583.1px;font-size:15.6px;color:#333333;font-weight:normal;transform:scaleX(0.91);transform-origin:100% 50%;">חסרי</div>
<div class="t " style="right:1004.6px;top:604.1px;font-size:15.6px;color:#333333;font-weight:normal;transform:scaleX(0.91);transform-origin:100% 50%;">דיור</div>
<div class="t " style="right:1063.7px;top:583.1px;font-size:15.6px;color:#333333;font-weight:normal;transform:scaleX(0.91);transform-origin:100% 50%;">עמנואל</div>
<div class="t " style="right:1123.2px;top:583.1px;font-size:15.6px;color:#333333;font-weight:normal;transform:scaleX(0.91);transform-origin:100% 50%;">לא</div>
<div class="t " style="right:1179.0px;top:583.1px;font-size:15.6px;color:#333333;font-weight:normal;transform:scaleX(0.91);transform-origin:100% 50%;">לא</div>
<div class="t " style="right:1243.2px;top:583.0px;font-size:16px;color:#333333;font-weight:normal;transform:scaleX(0.975);transform-origin:100% 50%;">1166</div>
<div class="t " style="right:1317.0px;top:583.1px;font-size:15.6px;color:#333333;font-weight:normal;transform:scaleX(0.91);transform-origin:100% 50%;">לא זכה</div>
<div class="t " style="right:1396.5px;top:583.0px;font-size:16px;color:#333333;font-weight:normal;transform:scaleX(0.975);transform-origin:100% 50%;">710</div>
<div class="t " style="right:1482.8px;top:583.3px;font-size:15.6px;color:#333333;font-weight:normal;">-</div>
<div style="position:absolute;left:332px;top:637px;width:1270px;height:59px;background:#f7f7f7"></div>
<div style="position:absolute;left:1474px;top:645px;width:120px;height:30px;background:#077e3c"></div>
<div class="t " style="right:335.4px;top:650.4px;font-size:16px;color:#fff;font-weight:normal;transform:scaleX(0.92);transform-origin:100% 50%;">ביטול השתתפות</div>
<div class="t " style="right:492.5px;top:646.0px;font-size:16px;color:#333333;font-weight:normal;transform:scaleX(0.975);transform-origin:100% 50%;">16/01/2023</div>
<svg style="position:absolute;left:1303.0px;top:641.0px;" width="32" height="32" viewBox="0 0 32 32"><g transform="scale(1.0)"><path d="M19.37,6.88 A9.4,9.4 0 1 0 24.78,14.74" fill="none" stroke="#08a045" stroke-width="2.1" stroke-linecap="round"/><path d="M19.3,9.8 L21.6,13.4 L26.5,5.4" fill="none" stroke="#08a045" stroke-width="2" stroke-linecap="round" stroke-linejoin="round"/><path d="M12.4,11.9 L15.2,10.4 H16.9 V18.1 H18.8 V19.8 H12.1 V18.1 H14 V12.8 L12.4,13.5 Z" fill="#08a045"/></g></svg>
<div class="t " style="right:657.5px;top:646.0px;font-size:16px;color:#3a6ea5;font-weight:normal;transform:scaleX(0.975);transform-origin:100% 50%;">2234</div>
<div class="t " style="right:728.0px;top:646.0px;font-size:16px;color:#333333;font-weight:normal;transform:scaleX(0.975);transform-origin:100% 50%;">28/12/2022</div>
<div class="t " style="right:829.4px;top:646.0px;font-size:16px;color:#333333;font-weight:normal;transform:scaleX(0.975);transform-origin:100% 50%;">08/01/2023</div>
<div class="t " style="right:925.6px;top:646.0px;font-size:16px;color:#333333;font-weight:normal;transform:scaleX(0.975);transform-origin:100% 50%;">73</div>
<div class="t " style="right:1004.6px;top:646.1px;font-size:15.6px;color:#333333;font-weight:normal;transform:scaleX(0.91);transform-origin:100% 50%;">חסרי</div>
<div class="t " style="right:1004.6px;top:667.1px;font-size:15.6px;color:#333333;font-weight:normal;transform:scaleX(0.91);transform-origin:100% 50%;">דיור</div>
<div class="t " style="right:1063.7px;top:646.1px;font-size:15.6px;color:#333333;font-weight:normal;transform:scaleX(0.91);transform-origin:100% 50%;">עמנואל</div>
<div class="t " style="right:1123.2px;top:646.1px;font-size:15.6px;color:#333333;font-weight:normal;transform:scaleX(0.91);transform-origin:100% 50%;">לא</div>
<div class="t " style="right:1179.0px;top:646.1px;font-size:15.6px;color:#333333;font-weight:normal;transform:scaleX(0.91);transform-origin:100% 50%;">לא</div>
<div class="t " style="right:1243.2px;top:646.0px;font-size:16px;color:#333333;font-weight:normal;transform:scaleX(0.975);transform-origin:100% 50%;">690</div>
<div class="t " style="right:1317.0px;top:646.1px;font-size:15.6px;color:#333333;font-weight:normal;transform:scaleX(0.91);transform-origin:100% 50%;">לא זכה</div>
<div class="t " style="right:1396.5px;top:646.0px;font-size:16px;color:#333333;font-weight:normal;transform:scaleX(0.975);transform-origin:100% 50%;">382</div>
<div class="t " style="right:1482.8px;top:646.3px;font-size:15.6px;color:#333333;font-weight:normal;">-</div>
<div style="position:absolute;left:332px;top:700px;width:1270px;height:59px;background:#f7f7f7"></div>
<div style="position:absolute;left:1474px;top:708px;width:120px;height:30px;background:#077e3c"></div>
<div class="t " style="right:335.4px;top:713.4px;font-size:16px;color:#fff;font-weight:normal;transform:scaleX(0.92);transform-origin:100% 50%;">ביטול השתתפות</div>
<div class="t " style="right:492.5px;top:709.0px;font-size:16px;color:#333333;font-weight:normal;transform:scaleX(0.975);transform-origin:100% 50%;">16/01/2023</div>
<svg style="position:absolute;left:1303.0px;top:704.0px;" width="32" height="32" viewBox="0 0 32 32"><g transform="scale(1.0)"><path d="M19.37,6.88 A9.4,9.4 0 1 0 24.78,14.74" fill="none" stroke="#08a045" stroke-width="2.1" stroke-linecap="round"/><path d="M19.3,9.8 L21.6,13.4 L26.5,5.4" fill="none" stroke="#08a045" stroke-width="2" stroke-linecap="round" stroke-linejoin="round"/><path d="M12.4,11.9 L15.2,10.4 H16.9 V18.1 H18.8 V19.8 H12.1 V18.1 H14 V12.8 L12.4,13.5 Z" fill="#08a045"/></g></svg>
<div class="t " style="right:657.5px;top:709.0px;font-size:16px;color:#3a6ea5;font-weight:normal;transform:scaleX(0.975);transform-origin:100% 50%;">2233</div>
<div class="t " style="right:728.0px;top:709.0px;font-size:16px;color:#333333;font-weight:normal;transform:scaleX(0.975);transform-origin:100% 50%;">28/12/2022</div>
<div class="t " style="right:829.4px;top:709.0px;font-size:16px;color:#333333;font-weight:normal;transform:scaleX(0.975);transform-origin:100% 50%;">08/01/2023</div>
<div class="t " style="right:925.6px;top:709.0px;font-size:16px;color:#333333;font-weight:normal;transform:scaleX(0.975);transform-origin:100% 50%;">90</div>
<div class="t " style="right:1004.6px;top:709.1px;font-size:15.6px;color:#333333;font-weight:normal;transform:scaleX(0.91);transform-origin:100% 50%;">חסרי</div>
<div class="t " style="right:1004.6px;top:730.1px;font-size:15.6px;color:#333333;font-weight:normal;transform:scaleX(0.91);transform-origin:100% 50%;">דיור</div>
<div class="t " style="right:1063.7px;top:709.1px;font-size:15.6px;color:#333333;font-weight:normal;transform:scaleX(0.91);transform-origin:100% 50%;">עמנואל</div>
<div class="t " style="right:1123.2px;top:709.1px;font-size:15.6px;color:#333333;font-weight:normal;transform:scaleX(0.91);transform-origin:100% 50%;">לא</div>
<div class="t " style="right:1179.0px;top:709.1px;font-size:15.6px;color:#333333;font-weight:normal;transform:scaleX(0.91);transform-origin:100% 50%;">לא</div>
<div class="t " style="right:1243.2px;top:709.0px;font-size:16px;color:#333333;font-weight:normal;transform:scaleX(0.975);transform-origin:100% 50%;">477</div>
<div class="t " style="right:1317.0px;top:709.1px;font-size:15.6px;color:#333333;font-weight:normal;transform:scaleX(0.91);transform-origin:100% 50%;">לא זכה</div>
<div class="t " style="right:1396.5px;top:709.0px;font-size:16px;color:#333333;font-weight:normal;transform:scaleX(0.975);transform-origin:100% 50%;">206</div>
<div class="t " style="right:1482.8px;top:709.3px;font-size:15.6px;color:#333333;font-weight:normal;">-</div>
<div style="position:absolute;left:332px;top:763px;width:1270px;height:58px;background:#f7f7f7"></div>
<div style="position:absolute;left:1474px;top:771px;width:120px;height:30px;background:#077e3c"></div>
<div class="t " style="right:335.4px;top:776.4px;font-size:16px;color:#fff;font-weight:normal;transform:scaleX(0.92);transform-origin:100% 50%;">ביטול השתתפות</div>
<div class="t " style="right:492.5px;top:772.0px;font-size:16px;color:#333333;font-weight:normal;transform:scaleX(0.975);transform-origin:100% 50%;">16/01/2023</div>
<svg style="position:absolute;left:1303.0px;top:767.0px;" width="32" height="32" viewBox="0 0 32 32"><g transform="scale(1.0)"><path d="M19.37,6.88 A9.4,9.4 0 1 0 24.78,14.74" fill="none" stroke="#08a045" stroke-width="2.1" stroke-linecap="round"/><path d="M19.3,9.8 L21.6,13.4 L26.5,5.4" fill="none" stroke="#08a045" stroke-width="2" stroke-linecap="round" stroke-linejoin="round"/><path d="M12.4,11.9 L15.2,10.4 H16.9 V18.1 H18.8 V19.8 H12.1 V18.1 H14 V12.8 L12.4,13.5 Z" fill="#08a045"/></g></svg>
<div class="t " style="right:657.5px;top:772.0px;font-size:16px;color:#3a6ea5;font-weight:normal;transform:scaleX(0.975);transform-origin:100% 50%;">2232</div>
<div class="t " style="right:728.0px;top:772.0px;font-size:16px;color:#333333;font-weight:normal;transform:scaleX(0.975);transform-origin:100% 50%;">28/12/2022</div>
<div class="t " style="right:829.4px;top:772.0px;font-size:16px;color:#333333;font-weight:normal;transform:scaleX(0.975);transform-origin:100% 50%;">08/01/2023</div>
<div class="t " style="right:925.6px;top:772.0px;font-size:16px;color:#333333;font-weight:normal;transform:scaleX(0.975);transform-origin:100% 50%;">129</div>
<div class="t " style="right:1004.6px;top:772.1px;font-size:15.6px;color:#333333;font-weight:normal;transform:scaleX(0.91);transform-origin:100% 50%;">חסרי</div>
<div class="t " style="right:1004.6px;top:793.1px;font-size:15.6px;color:#333333;font-weight:normal;transform:scaleX(0.91);transform-origin:100% 50%;">דיור</div>
<div class="t " style="right:1063.7px;top:772.1px;font-size:15.6px;color:#333333;font-weight:normal;transform:scaleX(0.91);transform-origin:100% 50%;">עמנואל</div>
<div class="t " style="right:1123.2px;top:772.1px;font-size:15.6px;color:#333333;font-weight:normal;transform:scaleX(0.91);transform-origin:100% 50%;">לא</div>
<div class="t " style="right:1179.0px;top:772.1px;font-size:15.6px;color:#333333;font-weight:normal;transform:scaleX(0.91);transform-origin:100% 50%;">לא</div>
<div class="t " style="right:1243.2px;top:772.0px;font-size:16px;color:#333333;font-weight:normal;transform:scaleX(0.975);transform-origin:100% 50%;">413</div>
<div class="t " style="right:1317.0px;top:772.1px;font-size:15.6px;color:#333333;font-weight:normal;transform:scaleX(0.91);transform-origin:100% 50%;">לא זכה</div>
<div class="t " style="right:1396.5px;top:772.0px;font-size:16px;color:#333333;font-weight:normal;transform:scaleX(0.975);transform-origin:100% 50%;">130</div>
<div class="t " style="right:1482.8px;top:772.3px;font-size:15.6px;color:#333333;font-weight:normal;">-</div>
<div style="position:absolute;left:332px;top:825px;width:1270px;height:59px;background:#f7f7f7"></div>
<div style="position:absolute;left:1474px;top:833px;width:120px;height:30px;background:#077e3c"></div>
<div class="t " style="right:335.4px;top:838.4px;font-size:16px;color:#fff;font-weight:normal;transform:scaleX(0.92);transform-origin:100% 50%;">ביטול השתתפות</div>
<div class="t " style="right:492.5px;top:834.0px;font-size:16px;color:#333333;font-weight:normal;transform:scaleX(0.975);transform-origin:100% 50%;">14/11/2022</div>
<svg style="position:absolute;left:1303.0px;top:829.0px;" width="32" height="32" viewBox="0 0 32 32"><g transform="scale(1.0)"><path d="M19.37,6.88 A9.4,9.4 0 1 0 24.78,14.74" fill="none" stroke="#08a045" stroke-width="2.1" stroke-linecap="round"/><path d="M19.3,9.8 L21.6,13.4 L26.5,5.4" fill="none" stroke="#08a045" stroke-width="2" stroke-linecap="round" stroke-linejoin="round"/><path d="M12.4,11.9 L15.2,10.4 H16.9 V18.1 H18.8 V19.8 H12.1 V18.1 H14 V12.8 L12.4,13.5 Z" fill="#08a045"/></g></svg>
<div class="t " style="right:657.5px;top:834.0px;font-size:16px;color:#3a6ea5;font-weight:normal;transform:scaleX(0.975);transform-origin:100% 50%;">2178</div>
<div class="t " style="right:728.0px;top:834.0px;font-size:16px;color:#333333;font-weight:normal;transform:scaleX(0.975);transform-origin:100% 50%;">23/10/2022</div>
<div class="t " style="right:829.4px;top:834.0px;font-size:16px;color:#333333;font-weight:normal;transform:scaleX(0.975);transform-origin:100% 50%;">03/11/2022</div>
<div class="t " style="right:925.6px;top:834.0px;font-size:16px;color:#333333;font-weight:normal;transform:scaleX(0.975);transform-origin:100% 50%;">16</div>
<div class="t " style="right:1004.6px;top:834.1px;font-size:15.6px;color:#333333;font-weight:normal;transform:scaleX(0.91);transform-origin:100% 50%;">חסרי</div>
<div class="t " style="right:1004.6px;top:855.1px;font-size:15.6px;color:#333333;font-weight:normal;transform:scaleX(0.91);transform-origin:100% 50%;">דיור</div>
<div class="t " style="right:1063.7px;top:834.1px;font-size:15.6px;color:#333333;font-weight:normal;transform:scaleX(0.91);transform-origin:100% 50%;">עמנואל</div>
<div class="t " style="right:1123.2px;top:834.1px;font-size:15.6px;color:#333333;font-weight:normal;transform:scaleX(0.91);transform-origin:100% 50%;">לא</div>
<div class="t " style="right:1179.0px;top:834.1px;font-size:15.6px;color:#333333;font-weight:normal;transform:scaleX(0.91);transform-origin:100% 50%;">לא</div>
<div class="t " style="right:1243.2px;top:834.0px;font-size:16px;color:#333333;font-weight:normal;transform:scaleX(0.975);transform-origin:100% 50%;">2643</div>
<div class="t " style="right:1317.0px;top:834.1px;font-size:15.6px;color:#333333;font-weight:normal;transform:scaleX(0.91);transform-origin:100% 50%;">לא זכה</div>
<div class="t " style="right:1396.5px;top:834.0px;font-size:16px;color:#333333;font-weight:normal;transform:scaleX(0.975);transform-origin:100% 50%;">1561</div>
<div class="t " style="right:1482.8px;top:834.3px;font-size:15.6px;color:#333333;font-weight:normal;">-</div>
<div style="position:absolute;left:332px;top:888px;width:1270px;height:59px;background:#f7f7f7"></div>
<div style="position:absolute;left:1474px;top:896px;width:120px;height:30px;background:#077e3c"></div>
<div class="t " style="right:335.4px;top:901.4px;font-size:16px;color:#fff;font-weight:normal;transform:scaleX(0.92);transform-origin:100% 50%;">ביטול השתתפות</div>
<div class="t " style="right:492.5px;top:897.0px;font-size:16px;color:#333333;font-weight:normal;transform:scaleX(0.975);transform-origin:100% 50%;">14/11/2022</div>
<svg style="position:absolute;left:1303.0px;top:892.0px;" width="32" height="32" viewBox="0 0 32 32"><g transform="scale(1.0)"><path d="M19.37,6.88 A9.4,9.4 0 1 0 24.78,14.74" fill="none" stroke="#08a045" stroke-width="2.1" stroke-linecap="round"/><path d="M19.3,9.8 L21.6,13.4 L26.5,5.4" fill="none" stroke="#08a045" stroke-width="2" stroke-linecap="round" stroke-linejoin="round"/><path d="M12.4,11.9 L15.2,10.4 H16.9 V18.1 H18.8 V19.8 H12.1 V18.1 H14 V12.8 L12.4,13.5 Z" fill="#08a045"/></g></svg>
<div class="t " style="right:657.5px;top:897.0px;font-size:16px;color:#3a6ea5;font-weight:normal;transform:scaleX(0.975);transform-origin:100% 50%;">2177</div>
<div class="t " style="right:728.0px;top:897.0px;font-size:16px;color:#333333;font-weight:normal;transform:scaleX(0.975);transform-origin:100% 50%;">23/10/2022</div>
<div class="t " style="right:829.4px;top:897.0px;font-size:16px;color:#333333;font-weight:normal;transform:scaleX(0.975);transform-origin:100% 50%;">03/11/2022</div>
<div class="t " style="right:925.6px;top:897.0px;font-size:16px;color:#333333;font-weight:normal;transform:scaleX(0.975);transform-origin:100% 50%;">42</div>
<div class="t " style="right:1004.6px;top:897.1px;font-size:15.6px;color:#333333;font-weight:normal;transform:scaleX(0.91);transform-origin:100% 50%;">חסרי</div>
<div class="t " style="right:1004.6px;top:918.1px;font-size:15.6px;color:#333333;font-weight:normal;transform:scaleX(0.91);transform-origin:100% 50%;">דיור</div>
<div class="t " style="right:1063.7px;top:897.1px;font-size:15.6px;color:#333333;font-weight:normal;transform:scaleX(0.91);transform-origin:100% 50%;">עמנואל</div>
<div class="t " style="right:1123.2px;top:897.1px;font-size:15.6px;color:#333333;font-weight:normal;transform:scaleX(0.91);transform-origin:100% 50%;">לא</div>
<div class="t " style="right:1179.0px;top:897.1px;font-size:15.6px;color:#333333;font-weight:normal;transform:scaleX(0.91);transform-origin:100% 50%;">לא</div>
<div class="t " style="right:1243.2px;top:897.0px;font-size:16px;color:#333333;font-weight:normal;transform:scaleX(0.975);transform-origin:100% 50%;">1321</div>
<div class="t " style="right:1317.0px;top:897.1px;font-size:15.6px;color:#333333;font-weight:normal;transform:scaleX(0.91);transform-origin:100% 50%;">לא זכה</div>
<div class="t " style="right:1396.5px;top:897.0px;font-size:16px;color:#333333;font-weight:normal;transform:scaleX(0.975);transform-origin:100% 50%;">749</div>
<div class="t " style="right:1482.8px;top:897.3px;font-size:15.6px;color:#333333;font-weight:normal;">-</div>
<div style="position:absolute;left:332px;top:951px;width:1270px;height:59px;background:#f7f7f7"></div>
<div style="position:absolute;left:1474px;top:959px;width:120px;height:30px;background:#077e3c"></div>
<div class="t " style="right:335.4px;top:964.4px;font-size:16px;color:#fff;font-weight:normal;transform:scaleX(0.92);transform-origin:100% 50%;">ביטול השתתפות</div>
<div class="t " style="right:492.5px;top:960.0px;font-size:16px;color:#333333;font-weight:normal;transform:scaleX(0.975);transform-origin:100% 50%;">14/11/2022</div>
<svg style="position:absolute;left:1303.0px;top:955.0px;" width="32" height="32" viewBox="0 0 32 32"><g transform="scale(1.0)"><path d="M19.37,6.88 A9.4,9.4 0 1 0 24.78,14.74" fill="none" stroke="#08a045" stroke-width="2.1" stroke-linecap="round"/><path d="M19.3,9.8 L21.6,13.4 L26.5,5.4" fill="none" stroke="#08a045" stroke-width="2" stroke-linecap="round" stroke-linejoin="round"/><path d="M12.4,11.9 L15.2,10.4 H16.9 V18.1 H18.8 V19.8 H12.1 V18.1 H14 V12.8 L12.4,13.5 Z" fill="#08a045"/></g></svg>
<div class="t " style="right:657.5px;top:960.0px;font-size:16px;color:#3a6ea5;font-weight:normal;transform:scaleX(0.975);transform-origin:100% 50%;">2176</div>
<div class="t " style="right:728.0px;top:960.0px;font-size:16px;color:#333333;font-weight:normal;transform:scaleX(0.975);transform-origin:100% 50%;">23/10/2022</div>
<div class="t " style="right:829.4px;top:960.0px;font-size:16px;color:#333333;font-weight:normal;transform:scaleX(0.975);transform-origin:100% 50%;">03/11/2022</div>
<div class="t " style="right:925.6px;top:960.0px;font-size:16px;color:#333333;font-weight:normal;transform:scaleX(0.975);transform-origin:100% 50%;">42</div>
<div class="t " style="right:1004.6px;top:960.1px;font-size:15.6px;color:#333333;font-weight:normal;transform:scaleX(0.91);transform-origin:100% 50%;">חסרי</div>
<div class="t " style="right:1004.6px;top:981.1px;font-size:15.6px;color:#333333;font-weight:normal;transform:scaleX(0.91);transform-origin:100% 50%;">דיור</div>
<div class="t " style="right:1063.7px;top:960.1px;font-size:15.6px;color:#333333;font-weight:normal;transform:scaleX(0.91);transform-origin:100% 50%;">עמנואל</div>
<div class="t " style="right:1123.2px;top:960.1px;font-size:15.6px;color:#333333;font-weight:normal;transform:scaleX(0.91);transform-origin:100% 50%;">לא</div>
<div class="t " style="right:1179.0px;top:960.1px;font-size:15.6px;color:#333333;font-weight:normal;transform:scaleX(0.91);transform-origin:100% 50%;">לא</div>
<div class="t " style="right:1243.2px;top:960.0px;font-size:16px;color:#333333;font-weight:normal;transform:scaleX(0.975);transform-origin:100% 50%;">457</div>
<div class="t " style="right:1317.0px;top:960.1px;font-size:15.6px;color:#333333;font-weight:normal;transform:scaleX(0.91);transform-origin:100% 50%;">לא זכה</div>
<div class="t " style="right:1396.5px;top:960.0px;font-size:16px;color:#333333;font-weight:normal;transform:scaleX(0.975);transform-origin:100% 50%;">231</div>
<div class="t " style="right:1482.8px;top:960.3px;font-size:15.6px;color:#333333;font-weight:normal;">-</div>
<div style="position:absolute;left:332px;top:1014px;width:1270px;height:59px;background:#f7f7f7"></div>
<div style="position:absolute;left:1474px;top:1022px;width:120px;height:30px;background:#077e3c"></div>
<div class="t " style="right:335.4px;top:1027.4px;font-size:16px;color:#fff;font-weight:normal;transform:scaleX(0.92);transform-origin:100% 50%;">ביטול השתתפות</div>
<div class="t " style="right:492.5px;top:1023.0px;font-size:16px;color:#333333;font-weight:normal;transform:scaleX(0.975);transform-origin:100% 50%;">14/11/2022</div>
<svg style="position:absolute;left:1303.0px;top:1018.0px;" width="32" height="32" viewBox="0 0 32 32"><g transform="scale(1.0)"><path d="M19.37,6.88 A9.4,9.4 0 1 0 24.78,14.74" fill="none" stroke="#08a045" stroke-width="2.1" stroke-linecap="round"/><path d="M19.3,9.8 L21.6,13.4 L26.5,5.4" fill="none" stroke="#08a045" stroke-width="2" stroke-linecap="round" stroke-linejoin="round"/><path d="M12.4,11.9 L15.2,10.4 H16.9 V18.1 H18.8 V19.8 H12.1 V18.1 H14 V12.8 L12.4,13.5 Z" fill="#08a045"/></g></svg>
<div class="t " style="right:657.5px;top:1023.0px;font-size:16px;color:#3a6ea5;font-weight:normal;transform:scaleX(0.975);transform-origin:100% 50%;">2175</div>
<div class="t " style="right:728.0px;top:1023.0px;font-size:16px;color:#333333;font-weight:normal;transform:scaleX(0.975);transform-origin:100% 50%;">23/10/2022</div>
<div class="t " style="right:829.4px;top:1023.0px;font-size:16px;color:#333333;font-weight:normal;transform:scaleX(0.975);transform-origin:100% 50%;">03/11/2022</div>
<div class="t " style="right:925.6px;top:1023.0px;font-size:16px;color:#333333;font-weight:normal;transform:scaleX(0.975);transform-origin:100% 50%;">46</div>
<div class="t " style="right:1004.6px;top:1023.1px;font-size:15.6px;color:#333333;font-weight:normal;transform:scaleX(0.91);transform-origin:100% 50%;">חסרי</div>
<div class="t " style="right:1004.6px;top:1044.1px;font-size:15.6px;color:#333333;font-weight:normal;transform:scaleX(0.91);transform-origin:100% 50%;">דיור</div>
<div class="t " style="right:1063.7px;top:1023.1px;font-size:15.6px;color:#333333;font-weight:normal;transform:scaleX(0.91);transform-origin:100% 50%;">עמנואל</div>
<div class="t " style="right:1123.2px;top:1023.1px;font-size:15.6px;color:#333333;font-weight:normal;transform:scaleX(0.91);transform-origin:100% 50%;">לא</div>
<div class="t " style="right:1179.0px;top:1023.1px;font-size:15.6px;color:#333333;font-weight:normal;transform:scaleX(0.91);transform-origin:100% 50%;">לא</div>
<div class="t " style="right:1243.2px;top:1023.0px;font-size:16px;color:#333333;font-weight:normal;transform:scaleX(0.975);transform-origin:100% 50%;">2394</div>
<div class="t " style="right:1317.0px;top:1023.1px;font-size:15.6px;color:#333333;font-weight:normal;transform:scaleX(0.91);transform-origin:100% 50%;">לא זכה</div>
<div class="t " style="right:1396.5px;top:1023.0px;font-size:16px;color:#333333;font-weight:normal;transform:scaleX(0.975);transform-origin:100% 50%;">1357</div>
<div class="t " style="right:1482.8px;top:1023.3px;font-size:15.6px;color:#333333;font-weight:normal;">-</div>
</div>
<svg style="position:absolute;left:25px;top:880px" width="150" height="140" viewBox="0 0 150 140"><g transform="translate(69.5,70)"><circle r="58" fill="none" stroke="#dadada" stroke-width="4"/><circle r="50" fill="none" stroke="#dadada" stroke-width="1.1"/><circle r="44" fill="#dadada"/><g transform="rotate(-16)"><rect x="-60" y="-17.5" width="135" height="35" fill="#fff"/><text x="-41" y="10" textLength="109" lengthAdjust="spacingAndGlyphs" font-family="Liberation Sans" font-size="30" fill="#fff" stroke="#dadada" stroke-width="1.5"><tspan font-weight="bold">NET</tspan><tspan stroke-width="1">FREE</tspan></text><text x="0" y="-22" textLength="52" lengthAdjust="spacingAndGlyphs" text-anchor="middle" font-family="Liberation Sans" font-weight="bold" font-size="19" fill="#fff" direction="rtl">מחשב</text><text x="0" y="36" textLength="46" lengthAdjust="spacingAndGlyphs" text-anchor="middle" font-family="Liberation Sans" font-weight="bold" font-size="19" fill="#fff" direction="rtl">מוגן</text></g><path d="M-68,-1 Q-58,-6 -47,-3 Q-44,14 -51,26 Q-62,22 -66,12 Q-68,6 -68,-1 Z" fill="#dadada" stroke="#fff" stroke-width="1.2"/><path d="M-70,2 Q-62,0 -57,7 Q-52,1 -44,1 M-66,5 Q-58,6 -57,12" fill="none" stroke="#fff" stroke-width="1"/></g></svg>
<div style="position:absolute;left:1903px;top:121px;width:17px;height:919px;background:#f1f1f1"></div>
<div style="position:absolute;left:1905px;top:262px;width:13px;height:574px;background:#c1c1c1"></div>
<svg style="position:absolute;left:1906px;top:125px;" width="11" height="10" viewBox="0 0 11 10"><path d="M1.5,7 H9.5 L5.5,2.5 Z" fill="#505050"/></svg>
<svg style="position:absolute;left:1906px;top:1025px;" width="11" height="10" viewBox="0 0 11 10"><path d="M1.5,3 H9.5 L5.5,7.5 Z" fill="#505050"/></svg>
<div style="position:absolute;left:0px;top:1040px;width:1920px;height:40px;background:linear-gradient(to right,#233a42 0%,#21343f 40%,#1d2c40 75%,#1a2741 100%)"></div>
<div style="position:absolute;left:4px;top:1040px;width:1px;height:40px;background:#6f7e84"></div>
<svg style="position:absolute;left:20px;top:1048px;" width="26" height="28" viewBox="0 0 26 28"><path d="M5,4 H21 V17 H11 L7,21 V17 H5 Z" fill="#fff"/><path d="M8,8 H18 M8,11 H18 M8,14 H14" stroke="#22373f" stroke-width="1.2"/></svg>
<svg style="position:absolute;left:16px;top:1059px;" width="19" height="19" viewBox="0 0 19 19"><circle cx="9.5" cy="9.5" r="8" fill="#2a2a2a" stroke="#7a7a7a" stroke-width="1"/><text x="9.5" y="14" text-anchor="middle" font-family="Liberation Sans" font-weight="bold" font-size="12" fill="#fff">2</text></svg>
<div style="position:absolute;left:48px;top:1043px;width:80px;text-align:center;color:#fff;font-size:12px;line-height:17px;">11:37<br>04/11/2024</div>
<div class="t " style="right:1768.7px;top:1053.3px;font-size:12px;color:#fff;font-weight:normal;">עבר</div>
<svg style="position:absolute;left:166px;top:1051px;" width="18" height="18" viewBox="0 0 18 18"><path d="M14.5,1.5 L16.5,3.5 L7,13 L4.8,15 L5,12.3 Z M12.5,3.5 L14.5,5.5" fill="none" stroke="#ffffff" stroke-width="1.2"/><path d="M15,8 Q17,9 15.5,11 L13.5,11 M4.5,9 Q1,11 2,15 Q3,17 5.5,16.5" fill="none" stroke="#ffffff" stroke-width="1.2"/></svg>
<svg style="position:absolute;left:194px;top:1051px;" width="18" height="18" viewBox="0 0 18 18"><path d="M2,6 H5 L9.5,2 V16 L5,12 H2 Z" fill="none" stroke="#ffffff" stroke-width="1.2"/><path d="M11.5,6.5 Q13,9 11.5,11.5 M13.5,4.5 Q16,9 13.5,13.5 M15.5,2.5 Q19,9 15.5,15.5" fill="none" stroke="#ffffff" stroke-width="1.2"/></svg>
<svg style="position:absolute;left:218px;top:1052px;" width="18" height="16" viewBox="0 0 18 16"><rect x="1.5" y="1.5" width="15" height="10" fill="none" stroke="#ffffff" stroke-width="1.2"/><path d="M6,14.5 H12 M9,11.5 V14.5" stroke="#ffffff" stroke-width="1.2"/><rect x="1.5" y="1.5" width="4" height="4" fill="#22373f" stroke="#ffffff" stroke-width="1"/><path d="M2.5,12 V15.5" stroke="#ffffff" stroke-width="1.2"/></svg>
<svg style="position:absolute;left:244px;top:1051px;" width="16" height="18" viewBox="0 0 16 18"><rect x="2" y="5" width="8" height="8" rx="1.5" fill="none" stroke="#ffffff" stroke-width="1.2"/><path d="M10,8 L13,6 V12 L10,10" fill="none" stroke="#ffffff" stroke-width="1.2"/><path d="M3,3 Q6,1 10,3 M3,15 Q6,17 10,15" fill="none" stroke="#ffffff" stroke-width="1.2"/></svg>
<svg style="position:absolute;left:268px;top:1054px;" width="14" height="10" viewBox="0 0 14 10"><path d="M1,8.5 L7,2.5 L13,8.5" fill="none" stroke="#ffffff" stroke-width="1.3"/></svg>
<svg style="position:absolute;left:306px;top:1051px;" width="26" height="18" viewBox="0 0 26 18"><path d="M1.5,1.5 H22 V16.5 H2.5 Q1.5,16.5 1.5,15.5 Z M22,4 H24.5 V15.5 Q24.5,16.5 23.5,16.5 H22" fill="none" stroke="#ffffff" stroke-width="1.3"/><rect x="4.5" y="5" width="6" height="7" fill="none" stroke="#ffffff" stroke-width="1.3"/><path d="M12.5,5.5 H19.5 M12.5,8.5 H19.5 M12.5,11.5 H19.5" stroke="#ffffff" stroke-width="1.3"/></svg>
<div style="position:absolute;left:1379px;top:1040px;width:48px;height:40px;background:#4a5566"></div>
<div style="position:absolute;left:1379px;top:1078px;width:48px;height:2px;background:#76b9ed"></div>
<svg style="position:absolute;left:1391px;top:1048px;" width="24" height="24" viewBox="0 0 24 24"><circle cx="12" cy="12" r="12" fill="#db4437"/><path d="M12,12 L22.4,6 A12,12 0 0 1 12,24 Z" fill="#fbc02d"/><path d="M12,12 L12,24 A12,12 0 0 1 1.6,6 Z" fill="#0f9d58"/><path d="M12,12 L1.6,6 A12,12 0 0 1 22.4,6 Z" fill="#db4437"/><circle cx="12" cy="12" r="5.6" fill="#fff"/><circle cx="12" cy="12" r="4.4" fill="#4285f4"/></svg>
<svg style="position:absolute;left:1439px;top:1047px;" width="26" height="26" viewBox="0 0 26 26"><path d="M8,8 Q8,2 12.5,2 Q17,2 17,8" fill="none" stroke="#fff" stroke-width="1.4"/><path d="M10,8 Q10,4.5 12.5,4.5" fill="none" stroke="#fff" stroke-width="1.2"/><path d="M1.5,7 H24 V22.5 Q24,24 22.5,24 H3 Q1.5,24 1.5,22.5 Z" fill="#fff"/><rect x="7" y="10" width="5" height="5" fill="#f25022"/><rect x="13" y="10" width="5" height="5" fill="#7fba00"/><rect x="7" y="16" width="5" height="5" fill="#00a4ef"/><rect x="13" y="16" width="5" height="5" fill="#ffb900"/></svg>
<svg style="position:absolute;left:1489px;top:1049px;" width="24" height="22" viewBox="0 0 24 22"><path d="M1,2 H8 L9.5,3.5 H22.5 V19.5 H1 Z" fill="#f8d775"/><path d="M1,2 H8 L9.5,3.5 H1 Z" fill="#e6a117"/><path d="M1,5 H22.5" stroke="#f3c04d" stroke-width="1"/><path d="M4.5,21 V11.5 H19 V21 H15.5 V15 H8 V21 Z" fill="#3f9bdc"/></svg>
<div style="position:absolute;left:1528px;top:1040px;width:344px;height:40px;background:#f0f0f0;border-top:1px solid #a0a0a0;box-sizing:border-box"></div>
<svg style="position:absolute;left:1842px;top:1048px;" width="20" height="22" viewBox="0 0 20 22"><circle cx="11.5" cy="9.2" r="6" fill="none" stroke="#1e1e1e" stroke-width="1.2"/><path d="M7.2,13.5 L2.5,18.8" stroke="#1e1e1e" stroke-width="1.3"/></svg>
<div class="t " style="right:88.7px;top:1052.4px;font-size:15px;color:#262626;font-weight:normal;">הקלד כאן כדי לחפש</div>
<svg style="position:absolute;left:1887px;top:1051px;" width="18" height="18" viewBox="0 0 18 18"><path d="M1,3 L7.6,2.1 V8.4 H1 Z M8.5,2 L17,0.8 V8.4 H8.5 Z M1,9.3 H7.6 V15.9 L1,15 Z M8.5,9.3 H17 V17.2 L8.5,16 Z" fill="#fff"/></svg>
</body></html>
